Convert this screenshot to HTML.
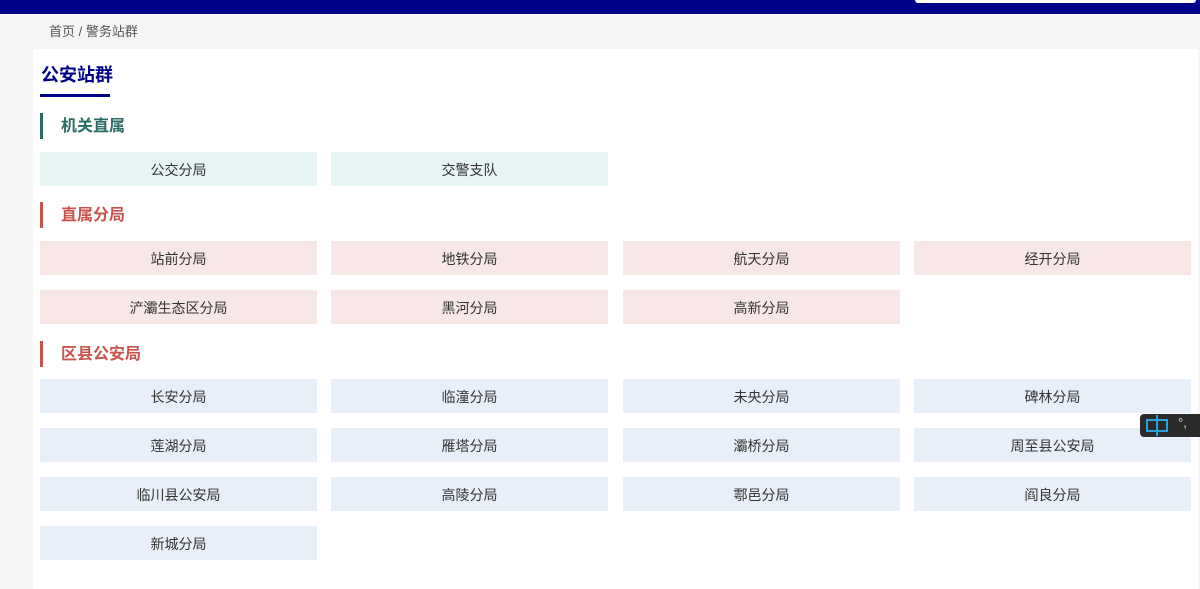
<!DOCTYPE html>
<html><head><meta charset="utf-8"><style>
*{margin:0;padding:0;box-sizing:border-box}
body{width:1200px;height:584px;background:#f5f5f5;position:relative;overflow:hidden;font-family:"Liberation Sans","Noto Sans CJK SC",sans-serif;}
.top{position:absolute;left:0;top:0;width:1200px;height:14px;background:#00008b}
.search{position:absolute;left:915px;top:0;width:281px;height:3px;background:#fff;border-radius:0 0 3px 3px}
.bc{position:absolute;left:49px;top:24px;font-size:13px;color:#555;line-height:16px}
.panel{position:absolute;left:33px;top:49px;width:1165px;height:540px;background:#fff}
.title{position:absolute;left:41px;top:63px;font-size:18px;font-weight:bold;color:#00008b;line-height:24px}
.tline{position:absolute;left:40px;top:94px;width:70px;height:3px;background:#00008b}
.h{position:absolute;left:40px;height:26px;border-left:3px solid;padding-left:18px;font-size:16px;font-weight:bold;line-height:28px}
.b{position:absolute;width:277px;height:34px;line-height:36px;text-align:center;font-size:14px;color:#333}
.g{background:#e6f4f3}.r{background:#f7e7e6}.u{background:#e8eff8}
.ime{position:absolute;left:1140px;top:414px;width:64px;height:23px;background:#2b2b2b;border-radius:4px;color:#ddd;font-size:13px}
</style></head><body>
<div class="top"></div><div class="search"></div>
<div class="bc">首页 / 警务站群</div>
<div class="panel"></div>
<div class="title">公安站群</div><div class="tline"></div>
<div class="h" style="top:113px;color:#2b6b63;border-color:#2b6b63">机关直属</div>
<div class="b g" style="left:40px;top:152px">公交分局</div>
<div class="b g" style="left:331px;top:152px">交警支队</div>
<div class="h" style="top:202px;color:#c9544f;border-color:#c9544f">直属分局</div>
<div class="b r" style="left:40px;top:241px">站前分局</div>
<div class="b r" style="left:331px;top:241px">地铁分局</div>
<div class="b r" style="left:623px;top:241px">航天分局</div>
<div class="b r" style="left:914px;top:241px">经开分局</div>
<div class="b r" style="left:40px;top:290px">浐灞生态区分局</div>
<div class="b r" style="left:331px;top:290px">黑河分局</div>
<div class="b r" style="left:623px;top:290px">高新分局</div>
<div class="h" style="top:341px;color:#c9544f;border-color:#c9544f">区县公安局</div>
<div class="b u" style="left:40px;top:379px">长安分局</div>
<div class="b u" style="left:331px;top:379px">临潼分局</div>
<div class="b u" style="left:623px;top:379px">未央分局</div>
<div class="b u" style="left:914px;top:379px">碑林分局</div>
<div class="b u" style="left:40px;top:428px">莲湖分局</div>
<div class="b u" style="left:331px;top:428px">雁塔分局</div>
<div class="b u" style="left:623px;top:428px">灞桥分局</div>
<div class="b u" style="left:914px;top:428px">周至县公安局</div>
<div class="b u" style="left:40px;top:477px">临川县公安局</div>
<div class="b u" style="left:331px;top:477px">高陵分局</div>
<div class="b u" style="left:623px;top:477px">鄠邑分局</div>
<div class="b u" style="left:914px;top:477px">阎良分局</div>
<div class="b u" style="left:40px;top:526px">新城分局</div>
<div class="ime"><svg width="30" height="23" style="position:absolute;left:4px;top:0"><rect x="3" y="6" width="20" height="11" fill="none" stroke="#29a3e0" stroke-width="2"/><line x1="13" y1="1" x2="13" y2="22" stroke="#29a3e0" stroke-width="2"/></svg><span style="position:absolute;left:38px;top:1px">°,</span></div>
</body></html>
